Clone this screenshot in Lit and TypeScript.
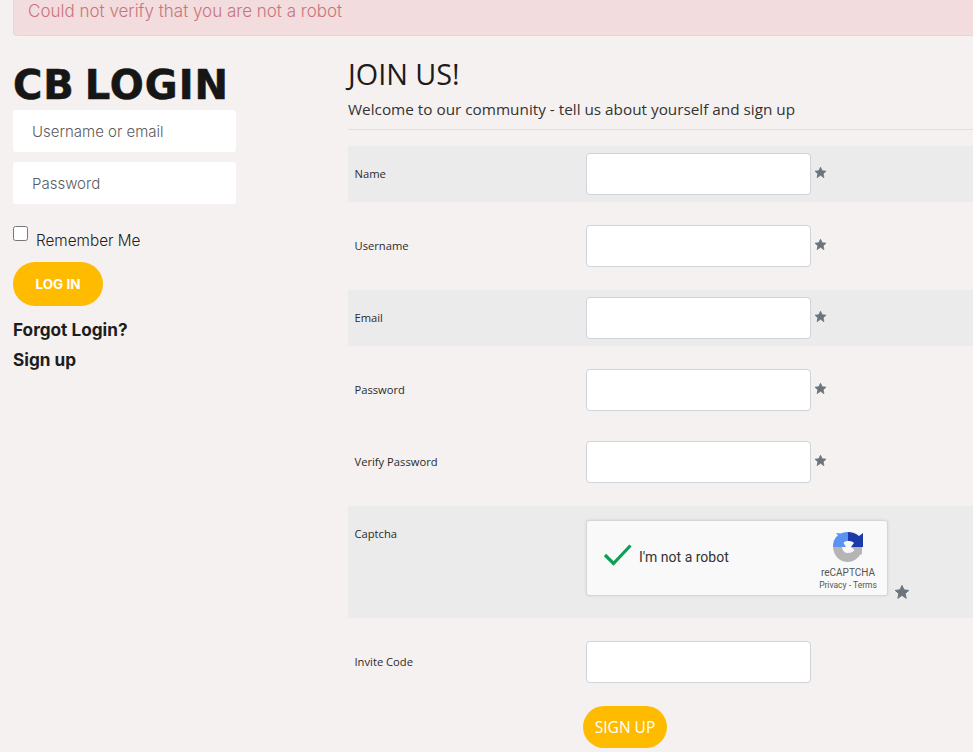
import { LitElement, html, css } from "lit";
import { customElement } from "lit/decorators.js";

const star = html`<svg class="star" viewBox="0 0 24 24"><path d="M12 2.2l3 6.6 7.2.8-5.4 4.8 1.5 7.1L12 17l-6.3 4.5 1.5-7.1L1.8 9.600l7.2-.8z" fill="#6c757d" stroke="#6c757d" stroke-width="1.500" stroke-linejoin="round"/></svg>`;

@customElement("app-root")
export class AppRoot extends LitElement {
  static styles = css`
    :host { display: block; height: 752px; overflow: hidden; background: #f5f1f0; color: #1a1a1a; font-family: "Open Sans", sans-serif; }
    .page { padding-left: 13px; display: flex; flex-direction: column; }
    .alert { height: 36px; box-sizing: border-box; background: #f2dcdd; border: 1px solid #eed2d4; border-top: 0; border-right: 0; border-radius: 0 0 0 4px; padding-left: 14px; color: #c9747c; font: 300 17px/22px Inter, sans-serif; }
    .cols { display: grid; grid-template-columns: 335px 1fr; }
    .left { padding-top: 25px; display: flex; flex-direction: column; align-items: flex-start; font-family: Inter, sans-serif; }
    h2 { margin: 0; font: 700 40px/48px "DejaVu Sans", sans-serif; letter-spacing: 1px; word-spacing: -5px; color: #161616; white-space: nowrap; -webkit-text-stroke: 0.6px #161616; }
    .field { width: 223px; height: 42px; box-sizing: border-box; background: #fff; border-radius: 3px; padding: 0 19px; margin-top: 1px; margin-bottom: 9px; display: flex; align-items: center; color: #5c5c5c; font-size: 15px; font-weight: 300; }
    .rem { display: flex; align-items: flex-start; margin-top: 13px; height: 30px; }
    .rem .box { width: 13px; height: 13px; margin: 0; border: 1px solid #767676; border-radius: 2.500px; background: #fff; }
    .rem span { margin-left: 8px; margin-top: 6px; font-size: 15.300px; font-weight: 300; line-height: 18px; color: #222; }
    .login { width: 90px; height: 44px; margin-top: 6px; border-radius: 22px; background: #ffbb00; color: #fff; font-weight: 700; font-size: 13.500px; display: flex; align-items: center; justify-content: center; }
    .link { font-weight: 700; font-size: 17.200px; line-height: 30px; color: #1d1d1d; }
    .forgot { margin-top: 9px; }
    .right { padding-top: 19px; min-width: 0; }
    h1 { margin: 0; font: 400 28.800px/37px "Open Sans", sans-serif; color: #1c1c1c; white-space: nowrap; }
    .sub { margin-top: 7px; height: 30px; font-size: 15.300px; line-height: 21px; color: #333; border-bottom: 1px solid #e3dfde; white-space: nowrap; }
    .rows { display: flex; flex-direction: column; gap: 16px; margin-top: 16px; }
    .row { display: grid; grid-template-columns: 238px 225px 1fr; align-items: center; height: 56px; }
    .row.alt { background: #ebebeb; }
    .row label { padding-left: 6.500px; margin-top: -2px; font-size: 11.200px; color: #2a2a2a; }
    .input { height: 42px; box-sizing: border-box; background: #fff; border: 1px solid #ced4da; border-radius: 4px; }
    .star { width: 13px; height: 13px; margin-left: 3px; margin-top: -3px; display: block; }
    .cap { height: 112px; align-items: start; grid-template-columns: 238px 302px 1fr; }
    .cap label { margin-top: 0; padding-top: 20px; }
    .cap .star { width: 16px; height: 16px; margin: 78px 0 0 6px; }
    .rc { margin-top: 14px; height: 76px; box-sizing: border-box; background: #f9f9f9; border: 1px solid #d6d6d6; border-radius: 3px; box-shadow: 0 0 3px #0000001a; display: flex; align-items: center; font-family: Roboto, sans-serif; }
    .check { width: 30px; height: 24px; margin: -7px 0 0 16px; }
    .rc .txt { margin-left: 6px; margin-top: -2px; font-size: 14px; color: #333; }
    .brand { margin: 5px 4px 0 auto; width: 70px; display: flex; flex-direction: column; align-items: center; color: #555; }
    .brand svg { width: 32px; height: 32px; }
    .brand b { font-weight: 400; font-size: 10px; line-height: 13px; margin-top: 3px; }
    .brand i { font-style: normal; font-size: 8.500px; line-height: 12px; }
    .signup { width: 84px; height: 42px; margin: 16px 0 0 235px; border-radius: 21px; background: #ffbb00; color: #fff; font-size: 15.500px; display: flex; align-items: center; justify-content: center; }
  `;

  private row(name: string, alt: boolean, req = true) {
    return html`<div class="row ${alt ? "alt" : ""}"><label>${name}</label><div class="input"></div>${req ? star : ""}</div>`;
  }

  render() {
    return html`<div class="page">
      <div class="alert">Could not verify that you are not a robot</div>
      <div class="cols">
        <div class="left">
          <h2>CB LOGIN</h2>
          <div class="field">Username or email</div>
          <div class="field">Password</div>
          <div class="rem"><div class="box"></div><span>Remember Me</span></div>
          <div class="login">LOG IN</div>
          <div class="link forgot">Forgot Login?</div>
          <div class="link">Sign up</div>
        </div>
        <div class="right">
          <h1>JOIN US!</h1>
          <div class="sub">Welcome to our community - tell us about yourself and sign up</div>
          <div class="rows">
            ${this.row("Name", true)}
            ${this.row("Username", false)}
            ${this.row("Email", true)}
            ${this.row("Password", false)}
            ${this.row("Verify Password", false)}
            <div class="row alt cap">
              <label>Captcha</label>
              <div class="rc">
                <svg class="check" viewBox="0 0 30 24"><path d="M2 12l8.500 8.500L27.500 2.500" fill="none" stroke="#0f9d58" stroke-width="3.200"/></svg>
                <span class="txt">I'm not a robot</span>
                <div class="brand">
                  <svg viewBox="0 0 32 32">
                    <path d="M16 1C20 1 24 2.500 27 5L31 2V16H19L22 12C21 10.500 18.500 10 16 10Z" fill="#1c3aa9"/>
                    <path d="M9 2.500C11 1.500 13.500 1 16 1V10C14 10 12.500 10.500 11.500 12L14 16H1C1 10 3.500 6 6 4.500L4 2Z" fill="#5b93f5"/>
                    <path d="M1 16H10C10.500 20 13 22 16 22C19 22 21 21 22.500 19L19 16H30V23L28 24C25 28 21 31 16 31C8 31 1.500 25 1 16Z" fill="#b5b5b5"/>
                  </svg>
                  <b>reCAPTCHA</b>
                  <i>Privacy - Terms</i>
                </div>
              </div>
              ${star}
            </div>
            ${this.row("Invite Code", false, false)}
          </div>
          <div class="signup">SIGN UP</div>
        </div>
      </div>
    </div>`;
  }
}
